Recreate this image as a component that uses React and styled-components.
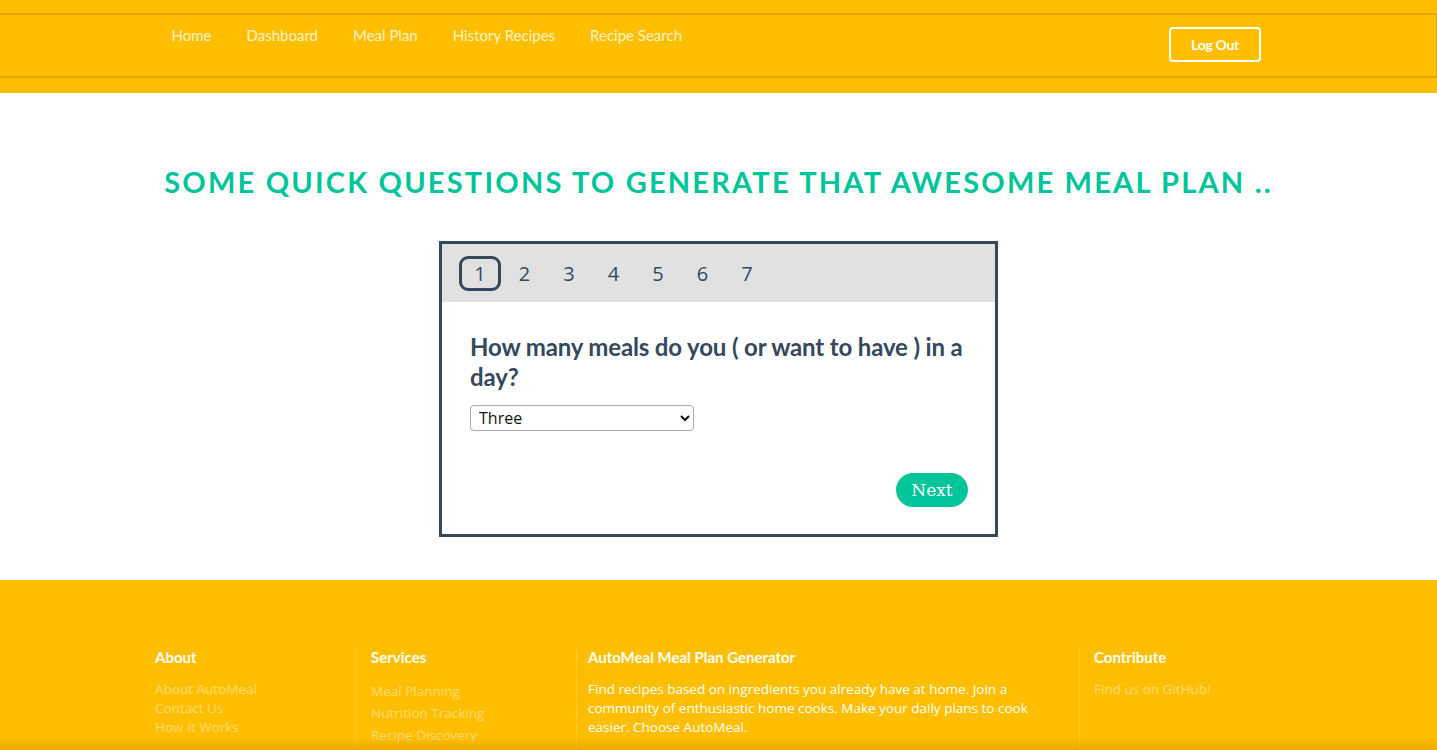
import React, { useState } from "react";
import styled, { createGlobalStyle } from "styled-components";

const Global = createGlobalStyle`
  html, body { margin: 0; padding: 0; background: #fff; }
  body { font-family: "Lato", "Open Sans", sans-serif; overflow: hidden; }
  * { box-sizing: border-box; }
`;

const YELLOW = "#FFBF00";
const TEAL = "#00C49A";
const NAVY = "#34495E";

const Header = styled.header`
  background: ${YELLOW};
  padding: 13px 0 15px;
`;

const NavBar = styled.nav`
  border-top: 2px solid #E0A800;
  border-bottom: 2px solid #E0A800;
  border-right: 1px solid #E0A800;
  height: 65px;
`;

const NavInner = styled.div`
  width: 1140px;
  margin: 0 auto;
  height: 100%;
  display: flex;
  align-items: flex-start;
  justify-content: space-between;
  padding: 0 27px 0 6px;
`;

const NavLinks = styled.ul`
  list-style: none;
  margin: 0;
  padding: 10px 0 0;
  display: flex;
`;

const NavLink = styled.li`
  padding: 0 17.5px;
  font-family: "Lato", sans-serif;
  font-size: 15px;
  line-height: 20px;
  color: rgba(255, 250, 225, 0.9);
`;

const LogOut = styled.button`
  margin-top: 12px;
  width: 92px;
  height: 35px;
  background: transparent;
  border: 2px solid #fff;
  border-radius: 4px;
  color: #fff;
  font-family: "Lato", sans-serif;
  font-weight: 700;
  font-size: 14px;
  letter-spacing: -0.3px;
`;

const Main = styled.main`
  padding: 70px 0 43px;
  display: flex;
  flex-direction: column;
  align-items: center;
`;

const Title = styled.h1`
  margin: 0 0 40px;
  font-family: "Lato", sans-serif;
  font-weight: 700;
  font-size: 29px;
  line-height: 38px;
  letter-spacing: 2.2px;
  color: ${TEAL};
  text-transform: uppercase;
  text-align: center;
`;

const Card = styled.section`
  width: 559px;
  border: 3px solid ${NAVY};
  background: #fff;
`;

const Steps = styled.div`
  height: 58px;
  background: #E1E1E1;
  display: flex;
  align-items: center;
  padding: 0 0 0 17px;
  gap: 2.5px;
`;

const Step = styled.span`
  width: 42px;
  height: 35px;
  display: flex;
  align-items: center;
  justify-content: center;
  font-family: "Open Sans", sans-serif;
  font-size: 20px;
  color: ${NAVY};
  border: 3px solid ${(p) => (p.$active ? NAVY : "transparent")};
  border-radius: 9px;
`;

const Body = styled.div`
  padding: 30px 27px 27px 28px;
  display: flex;
  flex-direction: column;
`;

const Question = styled.h2`
  margin: 0 0 13px;
  font-family: "Lato", sans-serif;
  font-weight: 700;
  font-size: 24px;
  line-height: 30px;
  letter-spacing: -0.15px;
  color: ${NAVY};
`;

const Select = styled.select`
  width: 224px;
  height: 26px;
  font-family: "Open Sans", sans-serif;
  font-size: 16px;
  color: #111;
  border: 1px solid #aaa;
  border-radius: 4px;
  background: #fff;
  padding: 0 4px;
`;

const Actions = styled.div`
  display: flex;
  justify-content: flex-end;
  margin-top: 42px;
`;

const NextButton = styled.button`
  width: 72px;
  height: 34px;
  border: none;
  border-radius: 17px;
  background: ${TEAL};
  color: #fff;
  font-family: "DejaVu Serif", "Liberation Serif", serif;
  font-size: 17px;
`;

const Footer = styled.footer`
  background: ${YELLOW};
  padding: 68px 0 40px;
`;

const FooterGrid = styled.div`
  width: 1157px;
  margin: 0 auto;
  display: grid;
  grid-template-columns: 216px 220px 503px 218px;
`;

const Col = styled.div`
  padding-left: ${(p) => p.$pad || 14}px;
  border-left: 1px solid ${(p) => (p.$first ? "transparent" : "rgba(255,255,255,0.18)")};
  min-height: 92px;
`;

const ColTitle = styled.h3`
  margin: 0 0 14px;
  font-family: "Lato", sans-serif;
  font-weight: 700;
  font-size: 15px;
  line-height: 18px;
  color: #fff;
`;

const LinkList = styled.ul`
  list-style: none;
  margin: 0;
  padding: 0;
`;

const FooterLink = styled.li`
  font-family: "Open Sans", sans-serif;
  font-size: 13.5px;
  line-height: ${(p) => p.$lh || 19}px;
  color: rgba(255, 255, 255, 0.45);
`;

const Para = styled.p`
  margin: 0;
  font-family: "Open Sans", sans-serif;
  font-size: 13.5px;
  line-height: 19px;
  color: #fff;
  width: 470px;
`;

const BottomShade = styled.div`
  position: fixed;
  left: 0;
  right: 0;
  bottom: 0;
  height: 14px;
  pointer-events: none;
  background: linear-gradient(to bottom, rgba(200, 140, 0, 0), rgba(210, 150, 0, 0.45));
`;

export default function App() {
  const [meals, setMeals] = useState("three");
  return (
    <>
      <Global />
      <Header>
        <NavBar>
          <NavInner>
            <NavLinks>
              {["Home", "Dashboard", "Meal Plan", "History Recipes", "Recipe Search"].map((l) => (
                <NavLink key={l}>{l}</NavLink>
              ))}
            </NavLinks>
            <LogOut>Log Out</LogOut>
          </NavInner>
        </NavBar>
      </Header>
      <Main>
        <Title>Some quick questions to generate that awesome meal plan ..</Title>
        <Card>
          <Steps>
            {[1, 2, 3, 4, 5, 6, 7].map((n) => (
              <Step key={n} $active={n === 1}>{n}</Step>
            ))}
          </Steps>
          <Body>
            <Question>How many meals do you ( or want to have ) in a day?</Question>
            <Select value={meals} onChange={(e) => setMeals(e.target.value)}>
              <option value="one">One</option>
              <option value="two">Two</option>
              <option value="three">Three</option>
              <option value="four">Four</option>
              <option value="five">Five</option>
            </Select>
            <Actions>
              <NextButton>Next</NextButton>
            </Actions>
          </Body>
        </Card>
      </Main>
      <Footer>
        <FooterGrid>
          <Col $first>
            <ColTitle>About</ColTitle>
            <LinkList>
              <FooterLink>About AutoMeal</FooterLink>
              <FooterLink>Contact Us</FooterLink>
              <FooterLink>How It Works</FooterLink>
            </LinkList>
          </Col>
          <Col>
            <ColTitle>Services</ColTitle>
            <LinkList>
              <FooterLink $lh={22}>Meal Planning</FooterLink>
              <FooterLink $lh={22}>Nutrition Tracking</FooterLink>
              <FooterLink $lh={22}>Recipe Discovery</FooterLink>
            </LinkList>
          </Col>
          <Col $pad={11}>
            <ColTitle>AutoMeal Meal Plan Generator</ColTitle>
            <Para>
              Find recipes based on ingredients you already have at home. Join a community of
              enthusiastic home cooks. Make your daily plans to cook easier. Choose AutoMeal.
            </Para>
          </Col>
          <Col>
            <ColTitle>Contribute</ColTitle>
            <LinkList>
              <FooterLink>Find us on GitHub!</FooterLink>
            </LinkList>
          </Col>
        </FooterGrid>
      </Footer>
      <BottomShade />
    </>
  );
}
